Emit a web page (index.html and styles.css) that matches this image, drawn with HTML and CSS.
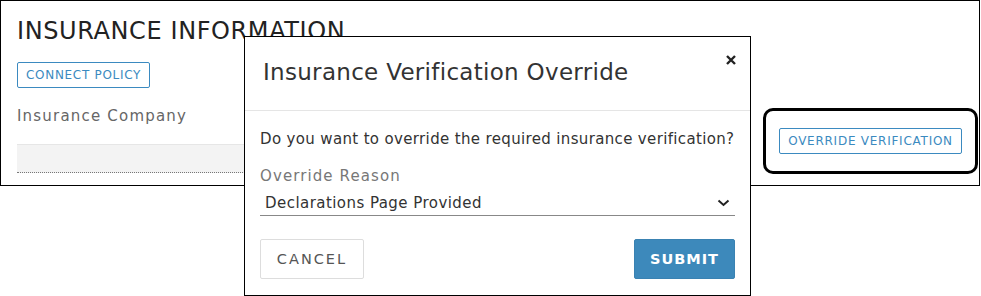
FILE: index.html
```html
<!DOCTYPE html>
<html lang="en">
  <head>
    <meta charset="UTF-8" />
    <title>Insurance Verification Override</title>
    <link rel="stylesheet" href="styles.css">
  </head>
  <body>
    <div class="card">
      <h1 class="card-title">INSURANCE INFORMATION</h1>
      <div class="card-row">
        <div class="card-left">
          <button class="btn-outline btn-small">CONNECT POLICY</button>
          <label class="field-label">Insurance Company</label>
          <div class="field-input"></div>
        </div>
        <div class="highlight">
          <button class="btn-outline btn-override">OVERRIDE VERIFICATION</button>
        </div>
      </div>
    </div>

    <div class="modal">
      <div class="modal-header">
        <h2 class="modal-title">Insurance Verification Override</h2>
        <svg class="modal-close" width="10" height="10" viewBox="0 0 10 10">
          <path d="M1 1 L9 9 M9 1 L1 9" stroke="#222" stroke-width="2.4" />
        </svg>
      </div>
      <div class="modal-body">
        <p class="modal-question">Do you want to override the required insurance verification?</p>
        <label class="modal-label">Override Reason</label>
        <div class="select">
          <span>Declarations Page Provided</span>
          <svg width="13" height="8" viewBox="0 0 13 8">
            <path d="M1.5 1.5 L6.5 6 L11.5 1.5" fill="none" stroke="#222" stroke-width="2" />
          </svg>
        </div>
        <div class="modal-actions">
          <button class="btn-cancel">CANCEL</button>
          <button class="btn-submit">SUBMIT</button>
        </div>
      </div>
    </div>
  </body>
</html>
```

FILE: styles.css
```css
* {
  box-sizing: border-box;
}
body {
  margin: 0;
  font-family: "DejaVu Sans", "Open Sans", sans-serif;
  background: #fff;
  color: #333;
  position: relative;
  width: 981px;
  height: 296px;
  overflow: hidden;
}
button {
  font-family: inherit;
  cursor: pointer;
}
.card {
  width: 980px;
  height: 186px;
  border: 1px solid #000;
  padding: 15px 0 0 16px;
}
.card-title {
  margin: 0;
  font-size: 24px;
  font-weight: 400;
  color: #222;
  line-height: 30px;
  letter-spacing: 0.6px;
}
.card-row {
  display: flex;
  justify-content: space-between;
  align-items: flex-start;
}
.card-left {
  display: flex;
  flex-direction: column;
  align-items: flex-start;
  padding-top: 16px;
}
.btn-outline {
  background: #fff;
  border: 1px solid #3b8ac0;
  color: #3b8ac0;
  border-radius: 2px;
}
.btn-small {
  height: 26px;
  padding: 0 8px;
  font-size: 12px;
  letter-spacing: 0.7px;
}
.field-label {
  margin-top: 19px;
  font-size: 15px;
  color: #666;
  letter-spacing: 1.2px;
}
.field-input {
  margin-top: 19px;
  width: 700px;
  height: 29px;
  background: #f3f3f3;
  border-top: 1px solid #e6e6e6;
  border-bottom: 1px dotted #777;
}
.highlight {
  margin-top: 62px;
  margin-right: 1px;
  width: 215px;
  height: 66px;
  border: 3px solid #000;
  border-radius: 10px;
  display: flex;
  align-items: center;
  justify-content: center;
}
.btn-override {
  height: 26px;
  padding: 0 8px;
  font-size: 12px;
  letter-spacing: 0.75px;
}
.modal {
  position: absolute;
  left: 244px;
  top: 36px;
  width: 507px;
  height: 260px;
  background: #fff;
  border: 1px solid #000;
}
.modal-header {
  height: 74px;
  border-bottom: 1px solid #e5e5e5;
  display: flex;
  justify-content: space-between;
  align-items: flex-start;
  padding: 0 14px 0 18px;
}
.modal-title {
  margin: 20px 0 0;
  font-size: 23px;
  font-weight: 400;
  color: #333;
  line-height: 30px;
  letter-spacing: 0.3px;
}
.modal-close {
  margin-top: 18px;
}
.modal-body {
  padding: 18px 15px 0 15px;
}
.modal-question {
  margin: 0;
  font-size: 15px;
  line-height: 20px;
  color: #333;
  letter-spacing: 0.35px;
}
.modal-label {
  display: block;
  margin-top: 17px;
  font-size: 15px;
  color: #777;
  letter-spacing: 1.1px;
  line-height: 20px;
}
.select {
  margin-top: 6px;
  height: 24px;
  border-bottom: 1px solid #888;
  display: flex;
  justify-content: space-between;
  align-items: center;
  padding: 0 5px 2px 5px;
  font-size: 15px;
  color: #333;
  letter-spacing: 0.45px;
}
.modal-actions {
  margin-top: 23px;
  display: flex;
  justify-content: space-between;
}
.btn-cancel {
  width: 104px;
  height: 40px;
  background: #fff;
  border: 1px solid #ddd;
  border-radius: 2px;
  color: #555;
  font-size: 14.5px;
  letter-spacing: 2px;
}
.btn-submit {
  width: 101px;
  height: 40px;
  background: #3d89bb;
  border: 1px solid #3a82b2;
  border-radius: 2px;
  color: #fff;
  font-weight: bold;
  font-size: 14.5px;
  letter-spacing: 1px;
}
```
